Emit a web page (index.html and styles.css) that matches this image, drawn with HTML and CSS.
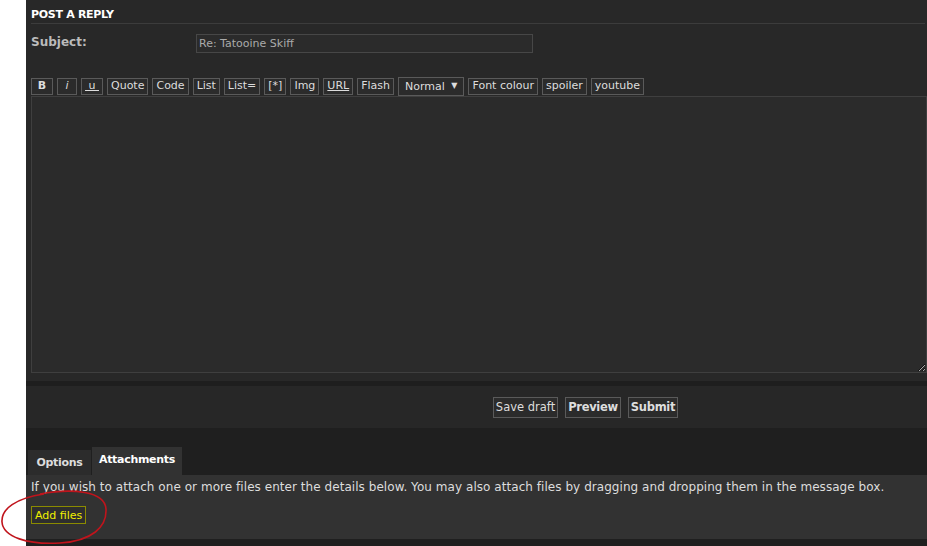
FILE: index.html
```html
<!DOCTYPE html>
<html lang="en">
<head>
    <meta charset="UTF-8">
    <title>Post a reply</title>
    <link rel="stylesheet" href="styles.css">
</head>
<body>
    <div class="page">
        <div class="panel">
            <h3 class="panel-title">POST A REPLY</h3>
            <div class="subject-row">
                <label for="subject">Subject:</label>
                <input type="text" id="subject" value="Re: Tatooine Skiff">
            </div>
            <div class="toolbar">
                <button class="btn b">B</button>
                <button class="btn i">i</button>
                <button class="btn u">&nbsp;u&nbsp;</button>
                <button class="btn">Quote</button>
                <button class="btn">Code</button>
                <button class="btn">List</button>
                <button class="btn">List=</button>
                <button class="btn">[*]</button>
                <button class="btn">Img</button>
                <button class="btn url">URL</button>
                <button class="btn">Flash</button>
                <span class="select">Normal <span class="arrow">&#9660;</span></span>
                <button class="btn">Font colour</button>
                <button class="btn">spoiler</button>
                <button class="btn">youtube</button>
            </div>
            <textarea class="message"></textarea>
        </div>
        <div class="divider"></div>
        <div class="submit-row">
            <button class="btn">Save draft</button>
            <button class="btn strong">Preview</button>
            <button class="btn strong">Submit</button>
        </div>
        <div class="tabs">
            <span class="tab opt">Options</span>
            <span class="tab active">Attachments</span>
        </div>
        <div class="attach">
            <p>If you wish to attach one or more files enter the details below. You may also attach files by dragging and dropping them in the message box.</p>
            <button class="add-files">Add files</button>
        </div>
        <div class="foot"></div>
    </div>
    <svg class="circle" width="110" height="58" viewBox="0 0 110 58">
        <path d="M40 5 C72 -1 105 2 106 20 C107 38 92 52 60 54 C28 56 3 48 2 33 C1 20 16 9 44 5" fill="none" stroke="#c0141c" stroke-width="1.6"/>
    </svg>
</body>
</html>
```

FILE: styles.css
```css
body {
    margin: 0;
    background-color: #fff;
    font-family: "DejaVu Sans", Verdana, sans-serif;
    color: #ddd;
    height: 546px;
    overflow: hidden;
}
.page {
    margin-left: 26px;
    background-color: #1f1f1f;
    height: 546px;
}
.panel {
    background-color: #282828;
    padding: 0 2px 8px 5px;
}
.panel-title {
    margin: 0;
    padding: 8px 0 2px 0;
    font-size: 11px;
    font-weight: bold;
    color: #fff;
    border-bottom: 1px solid #3c3c3c;
    letter-spacing: -0.3px;
}
.subject-row {
    display: flex;
    align-items: flex-start;
    padding-top: 10px;
    height: 42px;
}
.subject-row label {
    width: 165px;
    font-size: 12px;
    font-weight: bold;
    color: #bbb;
    padding-top: 1px;
}
.subject-row input {
    width: 331px;
    height: 13px;
    padding: 2px 2px;
    background-color: #2b2b2b;
    border: 1px solid #474747;
    color: #aaa;
    font-family: inherit;
    font-size: 11px;
}
.toolbar {
    display: flex;
    align-items: center;
    gap: 4px;
    height: 20px;
}
.btn {
    background-color: #2b2b2b;
    border: 1px solid #5a5a5a;
    color: #ddd;
    font-family: inherit;
    font-size: 11px;
    height: 17px;
    padding: 0 3px;
    line-height: 14px;
    border-radius: 0;
}
.btn.b {
    font-weight: bold;
    width: 22px;
}
.btn.i {
    font-style: italic;
    width: 20px;
}
.btn.u, .btn.url {
    text-decoration: underline;
}
.btn.u {
    width: 22px;
}
.select {
    display: inline-block;
    border: 1px solid #5a5a5a;
    background-color: #2b2b2b;
    font-size: 11px;
    height: 17px;
    line-height: 15px;
    padding: 0 6px 0 6px;
    color: #ddd;
}
.select .arrow {
    font-size: 8px;
    vertical-align: 2px;
    margin-left: 3px;
}
.message {
    display: block;
    width: 894px;
    height: 275px;
    margin-top: 0;
    background-color: #2b2b2b;
    border: 1px solid #3f3f3f;
    padding: 0;
    resize: vertical;
}
.divider {
    height: 5px;
    background-color: #1e1e1e;
}
.submit-row {
    background-color: #272727;
    height: 42px;
    display: flex;
    align-items: center;
    justify-content: center;
    gap: 7px;
    padding-left: 218px;
}
.submit-row .btn {
    height: 21px;
    font-size: 11.5px;
    padding: 0 2px;
}
.submit-row .btn.strong {
    font-weight: bold;
    letter-spacing: -0.3px;
}
.tabs {
    display: flex;
    align-items: flex-end;
    padding: 19px 0 0 2px;
    gap: 1px;
}
.tab {
    background-color: #2c2c2c;
    font-size: 11px;
    font-weight: bold;
    color: #ddd;
    height: 25px;
    line-height: 25px;
    width: 90px;
    text-align: center;
    letter-spacing: -0.3px;
}
.tab.opt {
    width: 63px;
}
.tab.active {
    background-color: #323232;
    color: #fff;
    height: 28px;
    line-height: 26px;
}
.attach {
    background-color: #323232;
    height: 64px;
    padding: 0 5px;
}
.attach p {
    margin: 0;
    padding-top: 5px;
    font-size: 12px;
    color: #ddd;
    letter-spacing: 0.05px;
}
.add-files {
    margin-top: 12px;
    background-color: #2e2e2e;
    border: 1px solid #8b8b00;
    color: #f0f000;
    font-family: inherit;
    font-size: 11px;
    height: 18px;
    padding: 0 3px;
}
.foot {
    height: 8px;
    background-color: #1f1f1f;
}
.circle {
    position: absolute;
    left: 0;
    top: 489px;
}
```
